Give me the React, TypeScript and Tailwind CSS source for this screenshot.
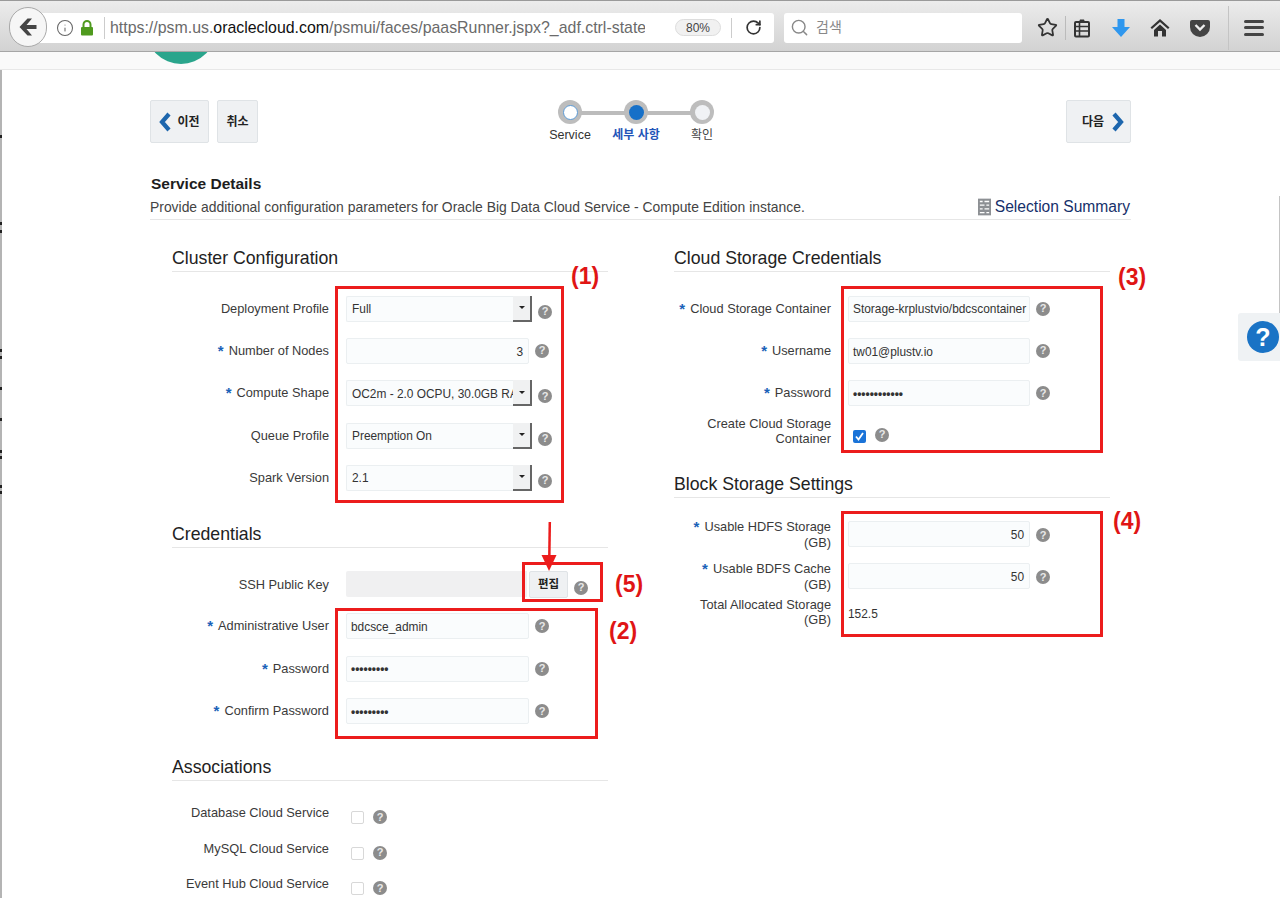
import React from "react";
import { Info, Star, RotateCw, Search } from "lucide-react";

const font = { fontFamily: '"Liberation Sans","Noto Sans CJK KR",sans-serif' };

function Q({ className = "" }: { className?: string }) {
  return (
    <span className={"flex h-[14px] w-[14px] shrink-0 items-center justify-center rounded-full bg-[#8c8c8c] text-[11px] font-bold leading-none text-[#e8e8e8] " + className}>?</span>
  );
}

function Star2() {
  return <span className="text-[15px] font-bold leading-none text-[#1a62b8]">*</span>;
}

function Label({ req, children, className = "" }: { req?: boolean; children: React.ReactNode; className?: string }) {
  return (
    <div className={"w-[157px] shrink-0 text-right text-[12.8px] leading-[15px] text-[#3a3a3a] " + className}>
      {req && <span className="mr-[5px] inline-block align-top"><Star2 /></span>}
      {children}
    </div>
  );
}

function Field({ value, right, w, pw }: { value?: string; right?: boolean; w: string; pw?: boolean }) {
  return (
    <div className={"flex h-[26px] items-center whitespace-nowrap rounded-[2px] border border-[#ebeff1] bg-[#fafcfd] pl-[4px] pr-[3px] pt-[3px] text-[11.9px] text-[#333] " + w + (right ? " justify-end pr-[5px]" : "") + (pw ? " font-bold" : "")}>
      {value}
    </div>
  );
}

function Select({ value }: { value: string }) {
  return (
    <div className="flex h-[26px] w-[186px] items-center">
      <div className="flex h-[26px] w-[167px] items-center overflow-hidden whitespace-nowrap rounded-l-[2px] border border-r-0 border-[#ebeff1] bg-[#fafcfd] pl-[5px] pt-[3px] text-[11.9px] text-[#333]">{value}</div>
      <div className="flex h-[26px] w-[19px] items-center justify-center border-b-2 border-r-2 border-[#666] bg-[#f0f1f2]">
        <span className="h-0 w-0 border-x-[3px] border-t-[3px] border-x-transparent border-t-[#222]" />
      </div>
    </div>
  );
}

function Row({ label, req, children, h = "h-[42.3px]" }: { label: React.ReactNode; req?: boolean; children: React.ReactNode; h?: string }) {
  return (
    <div className={"flex items-center " + h}>
      <Label req={req}>{label}</Label>
      <div className="ml-[17px] flex items-center">{children}</div>
    </div>
  );
}

function Section({ title, className = "" }: { title: string; className?: string }) {
  return (
    <div className={"h-[25px] border-b border-[#e6e6e6] text-[17.7px] leading-[22px] text-[#222] " + className}>{title}</div>
  );
}

function Box({ className }: { className: string }) {
  return <div className={"absolute border-[3px] border-[#ec1c1c] " + className} />;
}

function Note({ className, children }: { className: string; children: string }) {
  return <div className={"absolute text-[23px] font-bold leading-none text-[#e01515] " + className}>{children}</div>;
}

function Chevron({ left }: { left?: boolean }) {
  return (
    <svg width="13" height="20" viewBox="0 0 13 20">
      <path d={left ? "M10 2 3 10l7 8" : "M3 2l7 8-7 8"} fill="none" stroke="#1d66ad" strokeWidth="4.2" />
    </svg>
  );
}

function NavBtn({ className, children }: { className: string; children: React.ReactNode }) {
  return (
    <div className={"flex h-[43px] items-center justify-center rounded-[2px] border border-[#dfe3e6] bg-[#eff1f3] text-[12px] font-bold text-[#222] " + className}>{children}</div>
  );
}

function Toolbar() {
  return (
    <div className="flex h-[52px] items-center border-y border-y-[#a6a6a6] border-t-[#9a9a9a] bg-gradient-to-b from-[#ececec] to-[#d2d2d2] pt-[3px]">
      <div className="relative ml-[30px] flex h-[30px] w-[744px] items-center rounded-r-[3px] bg-white">
        <div className="absolute left-[-21px] top-[-6px] flex h-[40px] w-[38px] items-center justify-center rounded-full border border-[#a9a9a9] bg-[#f6f6f6]">
          <svg width="20" height="20" viewBox="0 0 20 20"><path d="M9.500 1.500 1.500 10l8 8.500h4.500L8.500 12H18.500V8H8.500L14 1.500z" fill="#454545" /></svg>
        </div>
        <Info className="ml-[25.500px] shrink-0 text-[#666]" size={18} strokeWidth={1.4} />
        <svg className="ml-[6.500px] shrink-0" width="14" height="16" viewBox="0 0 14 16"><path d="M3.500 7V4.500a3.500 3.500 0 0 1 7 0V7" fill="none" stroke="#4f9a1e" strokeWidth="2" /><rect x="1" y="7" width="12" height="8.500" rx="1" fill="#4f9a1e" /></svg>
        <div className="ml-[10px] h-[22px] w-px bg-[#ccc]" />
        <div className="ml-[5px] w-[535px] overflow-hidden whitespace-nowrap text-[15.9px] text-[#6a6a6a]">
          https://psm.us.<span className="text-[#111]">oraclecloud.com</span>/psmui/faces/paasRunner.jspx?_adf.ctrl-state
        </div>
        <div className="ml-[30px] flex h-[17px] w-[46px] items-center justify-center rounded-full border border-[#ddd] bg-[#f1f1f1] text-[12px] text-[#444]">80%</div>
        <div className="ml-[10px] h-[20px] w-px bg-[#ccc]" />
        <RotateCw className="ml-[13px] text-[#333]" size={17} strokeWidth={2.4} />
      </div>
      <div className="ml-[10px] flex h-[30px] w-[238px] items-center rounded-[3px] bg-white pl-[6px] text-[14px] text-[#888]">
        <Search size={19} strokeWidth={1.8} className="text-[#888]" />
        <span className="ml-[7px]">검색</span>
      </div>
      <Star className="ml-[15px] text-[#333]" size={21} strokeWidth={2} />
      <div className="ml-[7px] h-[24px] w-px bg-[#bbb]" />
      <svg className="ml-[7px]" width="18" height="20" viewBox="0 0 18 20"><path d="M6 4 7 1.500h4L12 4" fill="#333" /><rect x="2" y="4" width="14" height="14.500" rx="1" fill="none" stroke="#333" strokeWidth="2" /><path d="M2 8.500h14M2 13h14M6.500 4v14" stroke="#333" strokeWidth="1.600" fill="none" /></svg>
      <svg className="ml-[20px]" width="20" height="20" viewBox="0 0 20 20"><path d="M6.500 1h7v8H19L10 19 1 9h5.500z" fill="#2f97ee" /></svg>
      <svg className="ml-[19px]" width="20" height="19" viewBox="0 0 20 19"><path d="M10 1 0.500 9.500 2 11l8-7 8 7 1.500-1.500z" fill="#333" /><path d="M4 12l6-5.500 6 5.500v6.500h-4V13H8v5.500H4z" fill="#333" /></svg>
      <svg className="ml-[20px]" width="20" height="18" viewBox="0 0 20 18"><path d="M2 1h16a2 2 0 0 1 2 2v5a10 10 0 0 1-20 0V3a2 2 0 0 1 2-2z" fill="#444" /><path d="M5.500 6 10 10.500 14.500 6" fill="none" stroke="#eee" strokeWidth="2.400" /></svg>
      <div className="ml-[18px] h-[44px] w-px bg-[#c4c4c4]" />
      <div className="ml-[15px] flex w-[20px] flex-col gap-[3.500px]">
        <div className="h-[3px] rounded-full bg-[#444]" />
        <div className="h-[3px] rounded-full bg-[#444]" />
        <div className="h-[3px] rounded-full bg-[#444]" />
      </div>
    </div>
  );
}

function Train() {
  return (
    <div className="relative ml-[279px] w-[198px]">
      <div className="absolute left-[33px] top-[11px] h-[4px] w-[132px] bg-[#bcbcbc]" />
      <div className="relative grid grid-cols-3 justify-items-center">
        <div className="flex h-[24px] w-[24px] items-center justify-center rounded-full bg-[#bdbdbd]">
          <div className="h-[15px] w-[15px] rounded-full border border-[#5c9bd6] bg-white" />
        </div>
        <div className="flex h-[24px] w-[24px] items-center justify-center rounded-full bg-[#bdbdbd]">
          <div className="h-[15px] w-[15px] rounded-full bg-[#1670c8]" />
        </div>
        <div className="flex h-[24px] w-[24px] items-center justify-center rounded-full bg-[#bdbdbd]">
          <div className="h-[15px] w-[15px] rounded-full bg-[#f0f2f5]" />
        </div>
      </div>
      <div className="mt-[3px] grid grid-cols-3 text-center text-[12.5px] leading-[16px] text-[#333]">
        <span>Service</span>
        <span className="text-[12px] font-bold text-[#1f55b8]">세부 사항</span>
        <span className="text-[12px] text-[#444]">확인</span>
      </div>
    </div>
  );
}

const ticks = [135, 222, 230, 349, 356, 387, 418, 450, 456, 485, 491];

export default function App() {
  return (
    <div className="relative h-[898px] w-[1280px] overflow-hidden bg-white" style={font}>
      <Toolbar />
      <div className="h-[18px] overflow-hidden border-b border-[#e8e8e8] bg-[#fafafa] pl-[146px]">
        <div className="-mt-[58px] h-[70px] w-[70px] rounded-full bg-[#2aa58c]" />
      </div>
      <div className="px-[150px] pt-[30px]">
        <div className="flex w-[981px] items-start">
          <div className="flex gap-[8px]">
            <NavBtn className="w-[59px] gap-[5px]"><Chevron left />이전</NavBtn>
            <NavBtn className="w-[41px]">취소</NavBtn>
          </div>
          <Train />
          <NavBtn className="ml-auto w-[65px] gap-[7px] pl-[9px]">다음<Chevron /></NavBtn>
        </div>

        <div className="mt-[32px] w-[981px] border-b border-[#e6e6e6] pb-[3px]">
          <div className="pl-[1px] text-[15.500px] font-bold leading-[18px] text-[#1d1d1d]">Service Details</div>
          <div className="mt-[5px] flex items-center justify-between text-[13.900px] leading-[18px] text-[#444]">
            <span>Provide additional configuration parameters for Oracle Big Data Cloud Service - Compute Edition instance.</span>
            <span className="mr-px flex items-center gap-[4px] text-[15.600px] text-[#16306a]">
              <svg width="13" height="18" viewBox="0 0 14 18"><rect width="14" height="18" fill="#8d9094" /><path d="M2 3h3M7 3h5M2 7h5M9 7h3M2 11h3M7 11h5M2 15h5M9 15h3" stroke="#fff" strokeWidth="1.500" /></svg>
              Selection Summary
            </span>
          </div>
        </div>

        <div className="mt-[27px] flex pl-[22px]">
          <div className="w-[436px]">
            <Section title="Cluster Configuration" />
            <div className="mt-[15.500px]">
              <Row label="Deployment Profile"><Select value="Full" /><Q className="ml-[6px] mt-[6px]" /></Row>
              <Row label="Number of Nodes" req><Field value="3" right w="w-[183px]" /><Q className="ml-[6px]" /></Row>
              <Row label="Compute Shape" req><Select value="OC2m - 2.0 OCPU, 30.0GB RAM" /><Q className="ml-[6px] mt-[6px]" /></Row>
              <Row label="Queue Profile"><Select value="Preemption On" /><Q className="ml-[6px] mt-[6px]" /></Row>
              <Row label="Spark Version"><Select value="2.1" /><Q className="ml-[6px] mt-[6px]" /></Row>
            </div>
            <Section title="Credentials" className="mt-[24px]" />
            <div className="mt-[15px]">
              <Row label="SSH Public Key">
                <div className="h-[26px] w-[181px] rounded-l-[2px] bg-[#f0f0f1]" />
                <div className="ml-[2px] flex h-[27px] w-[39px] items-center justify-center rounded-[2px] border border-[#dfe3e6] bg-[#eff1f3] text-[11.500px] font-bold text-[#222]">편집</div>
                <Q className="ml-[6px] mt-[7px]" />
              </Row>
              <Row label="Administrative User" req><Field value="bdcsce_admin" w="w-[183px]" /><Q className="ml-[6px]" /></Row>
              <Row label="Password" req><Field value="•••••••••" pw w="w-[183px]" /><Q className="ml-[6px]" /></Row>
              <Row label="Confirm Password" req><Field value="•••••••••" pw w="w-[183px]" /><Q className="ml-[6px]" /></Row>
            </div>
            <Section title="Associations" className="mt-[24px]" />
            <div className="mt-[14px]">
              {["Database Cloud Service", "MySQL Cloud Service", "Event Hub Cloud Service"].map((t) => (
                <Row key={t} label={t} h="h-[35.500px]">
                  <div className="ml-[5px] mt-[10px] h-[13px] w-[13px] rounded-[2px] border border-[#d8d8d8] bg-white" />
                  <Q className="ml-[9px] mt-[9px]" />
                </Row>
              ))}
            </div>
          </div>

          <div className="ml-[66px] w-[436px]">
            <Section title="Cloud Storage Credentials" />
            <div className="mt-[15.500px]">
              <Row label="Cloud Storage Container" req><Field value="Storage-krplustvio/bdcscontainer" w="w-[182px]" /><Q className="ml-[6px]" /></Row>
              <Row label="Username" req><Field value="tw01@plustv.io" w="w-[182px]" /><Q className="ml-[6px]" /></Row>
              <Row label="Password" req><Field value="••••••••••••" pw w="w-[182px]" /><Q className="ml-[6px]" /></Row>
              <Row label="Create Cloud Storage Container" h="h-[34px]">
                <div className="ml-[5px] mt-[10px] flex h-[13px] w-[13px] items-center justify-center rounded-[2px] bg-[#1a73d8]">
                  <svg width="11" height="11" viewBox="0 0 11 11"><path d="M2 5.500 4.500 8.500 9 2" fill="none" stroke="#fff" strokeWidth="1.800" /></svg>
                </div>
                <Q className="ml-[9px] mt-[7px]" />
              </Row>
            </div>
            <Section title="Block Storage Settings" className="mt-[24.500px]" />
            <div className="mt-[15px]">
              <Row label={<>Usable HDFS Storage<br />(GB)</>} req><Field value="50" right w="w-[182px]" /><Q className="ml-[6px] mt-[2px]" /></Row>
              <Row label={<>Usable BDFS Cache<br />(GB)</>} req><Field value="50" right w="w-[182px]" /><Q className="ml-[6px] mt-[2px]" /></Row>
              <Row label="Total Allocated Storage (GB)" h="h-[30px]"><span className="mt-[4px] text-[11.900px] text-[#333]">152.5</span></Row>
            </div>
          </div>
        </div>
      </div>

      <Box className="left-[335px] top-[286px] h-[217px] w-[229px]" />
      <Box className="left-[522px] top-[562px] h-[40px] w-[81px]" />
      <Box className="left-[335px] top-[608px] h-[131px] w-[263px]" />
      <Box className="left-[841px] top-[286px] h-[167px] w-[262px]" />
      <Box className="left-[841px] top-[511px] h-[126px] w-[262px]" />
      <Note className="left-[571px] top-[265px]">(1)</Note>
      <Note className="left-[609px] top-[620px]">(2)</Note>
      <Note className="left-[1118px] top-[266px]">(3)</Note>
      <Note className="left-[1113px] top-[510px]">(4)</Note>
      <Note className="left-[615px] top-[573px]">(5)</Note>
      <svg className="absolute left-[541px] top-[522px]" width="16" height="50" viewBox="0 0 16 50">
        <path d="M8.800 0 8.300 36" stroke="#ec1c1c" strokeWidth="2.500" /><path d="M0.500 33h15L8 49z" fill="#ec1c1c" />
      </svg>

      <div className="absolute bottom-0 left-0 top-[70px] w-[2px] bg-[#b4b4b4]" />
      {ticks.map((y) => (
        <div key={y} className="absolute left-0 h-[3px] w-[2px] bg-[#222]" style={{ top: y }} />
      ))}
      <div className="absolute left-[1279px] top-[196px] h-[117px] w-px bg-[#c4c4c4]" />

      <div className="absolute left-[1238px] top-[313px] flex h-[48px] w-[42px] items-center justify-end rounded-l-[3px] bg-[#eff2f4] pr-px">
        <div className="flex h-[32px] w-[32px] items-center justify-center rounded-full bg-[#1a73c5] text-[25px] font-bold leading-none text-white">?</div>
      </div>
    </div>
  );
}
